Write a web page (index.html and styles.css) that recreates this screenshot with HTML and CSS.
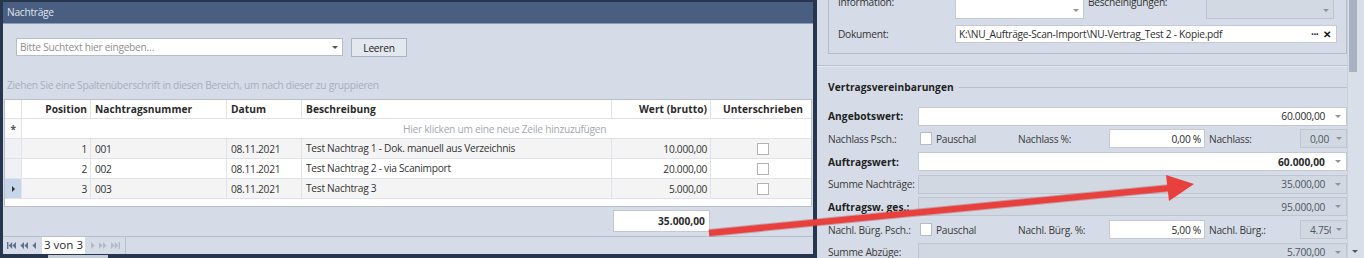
FILE: index.html
```html
<!DOCTYPE html>
<html lang="de">
<head>
<meta charset="utf-8">
<title>Nachträge</title>
<link rel="stylesheet" href="styles.css">
</head>
<body>
<div class="app">
  <section class="left">
    <div class="title">Nachträge</div>
    <div class="search">
      <div class="combo"><span class="ph">Bitte Suchtext hier eingeben…</span><span class="dd"></span></div>
      <button class="btn">Leeren</button>
    </div>
    <div class="grouppanel">Ziehen Sie eine Spaltenüberschrift in diesen Bereich, um nach dieser zu gruppieren</div>
    <div class="grid">
      <div class="row head">
        <div class="c ind"></div>
        <div class="c r">Position</div>
        <div class="c">Nachtragsnummer</div>
        <div class="c">Datum</div>
        <div class="c">Beschreibung</div>
        <div class="c r">Wert (brutto)</div>
        <div class="c ctr">Unterschrieben</div>
      </div>
      <div class="row newrow">
        <div class="c ind star">*</div>
        <div class="c span">Hier klicken um eine neue Zeile hinzuzufügen</div>
      </div>
      <div class="row odd">
        <div class="c ind"></div>
        <div class="c r">1</div>
        <div class="c">001</div>
        <div class="c">08.11.2021</div>
        <div class="c desc">Test Nachtrag 1 - Dok. manuell aus Verzeichnis</div>
        <div class="c r">10.000,00</div>
        <div class="c ctr"><span class="cb"></span></div>
      </div>
      <div class="row">
        <div class="c ind"></div>
        <div class="c r">2</div>
        <div class="c">002</div>
        <div class="c">08.11.2021</div>
        <div class="c desc">Test Nachtrag 2 - via Scanimport</div>
        <div class="c r">20.000,00</div>
        <div class="c ctr"><span class="cb"></span></div>
      </div>
      <div class="row odd">
        <div class="c ind sel"><span class="tri"></span></div>
        <div class="c r">3</div>
        <div class="c">003</div>
        <div class="c">08.11.2021</div>
        <div class="c desc">Test Nachtrag 3</div>
        <div class="c r">5.000,00</div>
        <div class="c ctr"><span class="cb"></span></div>
      </div>
    </div>
    <div class="footer"><div class="total">35.000,00</div></div>
    <div class="pager">
      <svg class="pi" width="9" height="7" viewBox="0 0 9 7"><rect x="0" y="0" width="1.4" height="7"/><path d="M5.2 0 L1.6 3.5 L5.2 7Z M9 0 L5.4 3.5 L9 7Z"/></svg>
      <svg class="pi" width="8" height="7" viewBox="0 0 8 7"><path d="M4 0 L0.4 3.5 L4 7Z M8 0 L4.4 3.5 L8 7Z"/></svg>
      <svg class="pi" width="4" height="7" viewBox="0 0 4 7"><path d="M4 0 L0.4 3.5 L4 7Z"/></svg>
      <span class="pos">3 von 3</span>
      <svg class="pi dis" width="4" height="7" viewBox="0 0 4 7"><path d="M0 0 L3.6 3.5 L0 7Z"/></svg>
      <svg class="pi dis" width="8" height="7" viewBox="0 0 8 7"><path d="M0 0 L3.6 3.5 L0 7Z M4 0 L7.6 3.5 L4 7Z"/></svg>
      <svg class="pi dis" width="9" height="7" viewBox="0 0 9 7"><path d="M0 0 L3.6 3.5 L0 7Z M3.8 0 L7.4 3.5 L3.8 7Z"/><rect x="7.6" y="0" width="1.4" height="7"/></svg>
    </div>
  </section>

  <section class="right">
    <div class="content">
      <div class="gbox">
        <div class="frow info">
          <span class="glabel">Information:</span>
          <div class="inp memo"><span class="fill"></span><span class="arr"></span></div>
          <span class="glabel2">Bescheinigungen:</span>
          <div class="inp memo ro"><span class="fill"></span><span class="arr"></span></div>
        </div>
        <div class="frow">
          <span class="glabel">Dokument:</span>
          <div class="inp doc"><span class="fill">K:\NU_Aufträge-Scan-Import\NU-Vertrag_Test 2 - Kopie.pdf</span><span class="dots">···</span><span class="x">✕</span></div>
        </div>
      </div>
      <div class="sep"></div>
      <div class="sechead"><span>Vertragsvereinbarungen</span><i></i></div>
      <div class="form">
        <div class="frm">
          <span class="lbl b">Angebotswert:</span>
          <div class="box wide"><span class="val">60.000,00</span><span class="arr"></span></div>
        </div>
        <div class="frm">
          <span class="lbl">Nachlass Psch.:</span>
          <span class="chk"><span class="cb"></span>Pauschal</span>
          <span class="lbl2">Nachlass %:</span>
          <div class="box pct"><span class="val">0,00 %</span></div>
          <span class="lbl3">Nachlass:</span>
          <div class="box sm ro"><span class="val">0,00</span><span class="arr"></span></div>
        </div>
        <div class="frm">
          <span class="lbl b">Auftragswert:</span>
          <div class="box wide"><span class="val b">60.000,00</span><span class="arr"></span></div>
        </div>
        <div class="frm">
          <span class="lbl">Summe Nachträge:</span>
          <div class="box wide ro"><span class="val">35.000,00</span><span class="arr"></span></div>
        </div>
        <div class="frm">
          <span class="lbl b">Auftragsw. ges.:</span>
          <div class="box wide ro"><span class="val">95.000,00</span><span class="arr"></span></div>
        </div>
        <div class="frm">
          <span class="lbl">Nachl. Bürg. Psch.:</span>
          <span class="chk"><span class="cb"></span>Pauschal</span>
          <span class="lbl2">Nachl. Bürg. %:</span>
          <div class="box pct"><span class="val">5,00 %</span></div>
          <span class="lbl3">Nachl. Bürg.:</span>
          <div class="box sm ro clip"><span class="val">4.750,00</span><span class="arr"></span></div>
        </div>
        <div class="frm">
          <span class="lbl">Summe Abzüge:</span>
          <div class="box wide ro"><span class="val">5.700,00</span><span class="arr"></span></div>
        </div>
      </div>
    </div>
    <div class="scroll"><div class="thumb"></div><span class="sarr"></span></div>
  </section>
</div>

<svg class="arrow" width="1364" height="258" viewBox="0 0 1364 258">
  <line x1="709" y1="233" x2="1170" y2="188" stroke="#b52a2a" stroke-opacity="0.35" stroke-width="8"/>
  <line x1="709" y1="233" x2="1170" y2="188" stroke="#e8403d" stroke-width="6"/>
  <polygon points="1194,184 1166,175 1169,201" fill="#e8403d"/>
</svg>
</body>
</html>
```

FILE: styles.css
```css
* { box-sizing: border-box; }
html, body { margin: 0; padding: 0; }
body {
  width: 1364px;
  height: 258px;
  overflow: hidden;
  position: relative;
  background: #d5dce7;
  font-family: "Open Sans", "Noto Sans", sans-serif;
  font-size: 10.2px;
  letter-spacing: -0.27px;
  color: #333;
}
.app { display: flex; height: 258px; }
.b, .row.head, .total, .sechead { letter-spacing: 0.05px; }

/* ---------- left panel ---------- */
.left {
  width: 817px;
  flex: none;
  height: 258px;
  border-top: 2px solid #27354f;
  border-left: 3px solid #27354f;
  border-right: 4px solid #27354f;
  border-bottom: 4px solid #27354f;
  background: #d5dce7;
  display: flex;
  flex-direction: column;
  position: relative;
}
.left::after {
  content: "";
  position: absolute;
  left: 45px;
  bottom: -4px;
  width: 60px;
  height: 3px;
  background: #c4ccd8;
}
.title {
  height: 22px;
  flex: none;
  background: #4a5e81;
  border-bottom: 1px solid #8e9db6;
  color: #dfe5ee;
  padding-left: 4px;
  line-height: 20px;
}
.search {
  height: 33px;
  flex: none;
  padding: 14px 0 0 13px;
  display: flex;
  gap: 8px;
  align-items: flex-start;
}
.combo {
  width: 327px;
  height: 18px;
  background: #fff;
  border: 1px solid #b5bdca;
  display: flex;
  align-items: center;
  justify-content: space-between;
  padding: 0 4px 0 3px;
}
.ph { color: #8f8f8f; }
.dd {
  width: 0; height: 0;
  border-left: 3px solid transparent;
  border-right: 3px solid transparent;
  border-top: 3px solid #555;
}
.btn {
  width: 56px;
  height: 19px;
  padding: 0;
  background: #e3e7ee;
  border: 1px solid #a9b3c3;
  font: inherit;
  letter-spacing: inherit;
  color: #222;
}
.grouppanel {
  height: 42px;
  flex: none;
  padding: 21px 0 0 4px;
  line-height: 14px;
  color: #a6afbe;
}
.grid {
  height: 108px;
  flex: none;
  margin: 0 1px;
  background: #fff;
  border: 1px solid #b8c0cc;
}
.row {
  display: grid;
  grid-template-columns: 17px 69px 136px 75px 310px 99px 100px;
  height: 20px;
  border-bottom: 1px solid #dfe2e6;
}
.row.head { height: 19px; font-weight: bold; color: #2a2a2a; }
.row.odd { background: #f4f4f4; }
.c {
  border-right: 1px solid #e0e3e7;
  padding: 0 4px 0 4px;
  display: flex;
  align-items: center;
  white-space: nowrap;
  overflow: hidden;
}
.c:last-child { border-right: none; }
.c.r { justify-content: flex-end; padding-right: 3px; }
.c.ctr { justify-content: center; padding-left: 8px; }
.c.desc { align-items: flex-start; padding-top: 2px; }
.c.ind { background: #eff1f4; padding: 0; justify-content: center; }
.head .c.ind { background: #fff; }
.newrow { background: #fff; }
.newrow .c.ind { background: #fafafa; }
.star { color: #555; font-size: 10px; font-weight: bold; }
.c.span {
  grid-column: 2 / 8;
  border-right: none;
  padding-left: 381px;
  color: #a4a9b0;
}
.c.ind.sel { background: #c6d5ea; }
.tri {
  width: 0; height: 0;
  border-top: 3px solid transparent;
  border-bottom: 3px solid transparent;
  border-left: 3px solid #333;
}
.cb {
  display: inline-block;
  width: 12px;
  height: 12px;
  background: #fff;
  border: 1px solid #b3b3b3;
}
.footer {
  height: 29px;
  flex: none;
  padding: 3px 0 0 610px;
}
.total {
  width: 97px;
  height: 22px;
  background: #fff;
  border: 1px solid #c2c8d2;
  font-weight: bold;
  color: #2b2b2b;
  text-align: right;
  padding-right: 4px;
  line-height: 20px;
}
.pager {
  height: 18px;
  flex: none;
  border-top: 1px solid #b7bfcb;
  display: flex;
  align-items: center;
  padding-left: 4px;
}
.pager::after {
  content: "";
  width: 1px;
  height: 17px;
  background: #b7bfcb;
  margin-left: 1px;
}
.pi { fill: #5f7190; margin-right: 4px; flex: none; }
.pi.dis { fill: #b0bacb; }
.pos {
  background: #fff;
  height: 17px;
  width: 43px;
  margin: 0 6px 0 2px;
  font-size: 11.6px;
  letter-spacing: 0;
  color: #2a2a2a;
  text-align: center;
  line-height: 16px;
}

/* ---------- right panel ---------- */
.right {
  flex: 1;
  display: flex;
  background: #d6dce7;
}
.content {
  width: 530px;
  flex: none;
  padding-left: 11px;
}
.gbox {
  width: 519px;
  margin-top: -30px;
  border: 1px solid #b3bcc9;
  padding: 20px 0 10px 9px;
  display: flex;
  flex-direction: column;
  gap: 6px;
}
.frow { display: flex; align-items: center; height: 18px; }
.frow.info { height: 28px; align-items: stretch; }
.glabel { width: 117px; color: #333; }
.info .glabel, .info .glabel2 { padding-top: 4px; }
.glabel2 { width: 122px; padding-left: 4px; color: #333; }
.inp {
  background: #fff;
  border: 1px solid #c3cad4;
  display: flex;
  align-items: center;
  height: 18px;
}
.inp.memo { width: 129px; height: 28px; align-items: flex-end; }
.inp.memo.ro { width: 128px; background: #d3d9e3; border-color: #bcc4cf; }
.inp .fill { flex: 1; padding-left: 3px; white-space: nowrap; overflow: hidden; color: #2e2e2e; }
.inp .arr, .box .arr {
  width: 14px;
  height: 16px;
  flex: none;
  display: flex;
  align-items: center;
  justify-content: center;
}
.inp .arr::before, .box .arr::before {
  content: "";
  width: 0; height: 0;
  border-left: 3px solid transparent;
  border-right: 3px solid transparent;
  border-top: 3px solid #8a93a1;
}
.inp.doc { width: 382px; }
.dots { font-weight: bold; color: #222; margin-right: 5px; letter-spacing: -0.5px; }
.x { font-weight: bold; color: #111; margin-right: 5px; font-size: 10px; }
.sep {
  height: 2px;
  margin: 11px 0 0 -11px;
  width: 530px;
  border-top: 1px solid #b8c1ce;
  border-bottom: 1px solid #e6eaf0;
}
.sechead {
  display: flex;
  align-items: center;
  height: 16px;
  margin-top: 12px;
  width: 519px;
  font-weight: bold;
  color: #1f1f1f;
}
.sechead i {
  flex: 1;
  height: 1px;
  background: #b7c0cc;
  margin-left: 5px;
}
.form { margin-top: 10px; width: 519px; }
.frm {
  display: flex;
  align-items: center;
  height: 22.67px;
}
.lbl { width: 90px; flex: none; color: #3a3a3a; white-space: nowrap; }
.b { font-weight: bold; color: #1e1e1e; }
.box {
  height: 19px;
  background: #fff;
  border: 1px solid #c3cad4;
  display: flex;
  align-items: center;
}
.box.ro { background: #d2d8e2; border-color: #bec6d1; }
.box .val { flex: 1; text-align: right; white-space: nowrap; overflow: hidden; color: #2a2a2a; }
.box.ro .val { color: #4f5663; }
.box.wide { width: 429px; }
.box.wide .val { padding-right: 5px; }
.box.wide .arr { width: 16px; }
.chk {
  width: 100px;
  flex: none;
  display: flex;
  align-items: center;
  gap: 4px;
  padding-left: 2px;
  color: #3a3a3a;
}
.chk .cb { width: 12px; height: 13px; border-color: #b6bdc8; }
.lbl2 { width: 91px; flex: none; color: #3a3a3a; }
.box.pct { width: 96px; }
.box.pct .val { padding-right: 3px; }
.lbl3 { width: 95px; flex: none; padding-left: 4px; color: #3a3a3a; }
.box.sm { width: 47px; }
.box.sm .val { padding-right: 2px; }
.box.sm .arr { width: 15px; }
.box.clip .val { text-align: left; padding-left: 9px; padding-right: 0; }

.scroll {
  width: 17px;
  flex: none;
  position: relative;
  background: #d9dfe8;
  border-left: 1px solid #c9d0db;
}
.thumb {
  width: 8px;
  height: 72px;
  margin-left: 1px;
  background: #a9b2c0;
}
.sarr {
  position: absolute;
  left: 4px;
  bottom: 5px;
  width: 0; height: 0;
  border-left: 3px solid transparent;
  border-right: 3px solid transparent;
  border-top: 3px solid #555;
}

/* ---------- annotation arrow overlay ---------- */
.arrow {
  position: absolute;
  left: 0;
  top: 0;
  pointer-events: none;
}
```
